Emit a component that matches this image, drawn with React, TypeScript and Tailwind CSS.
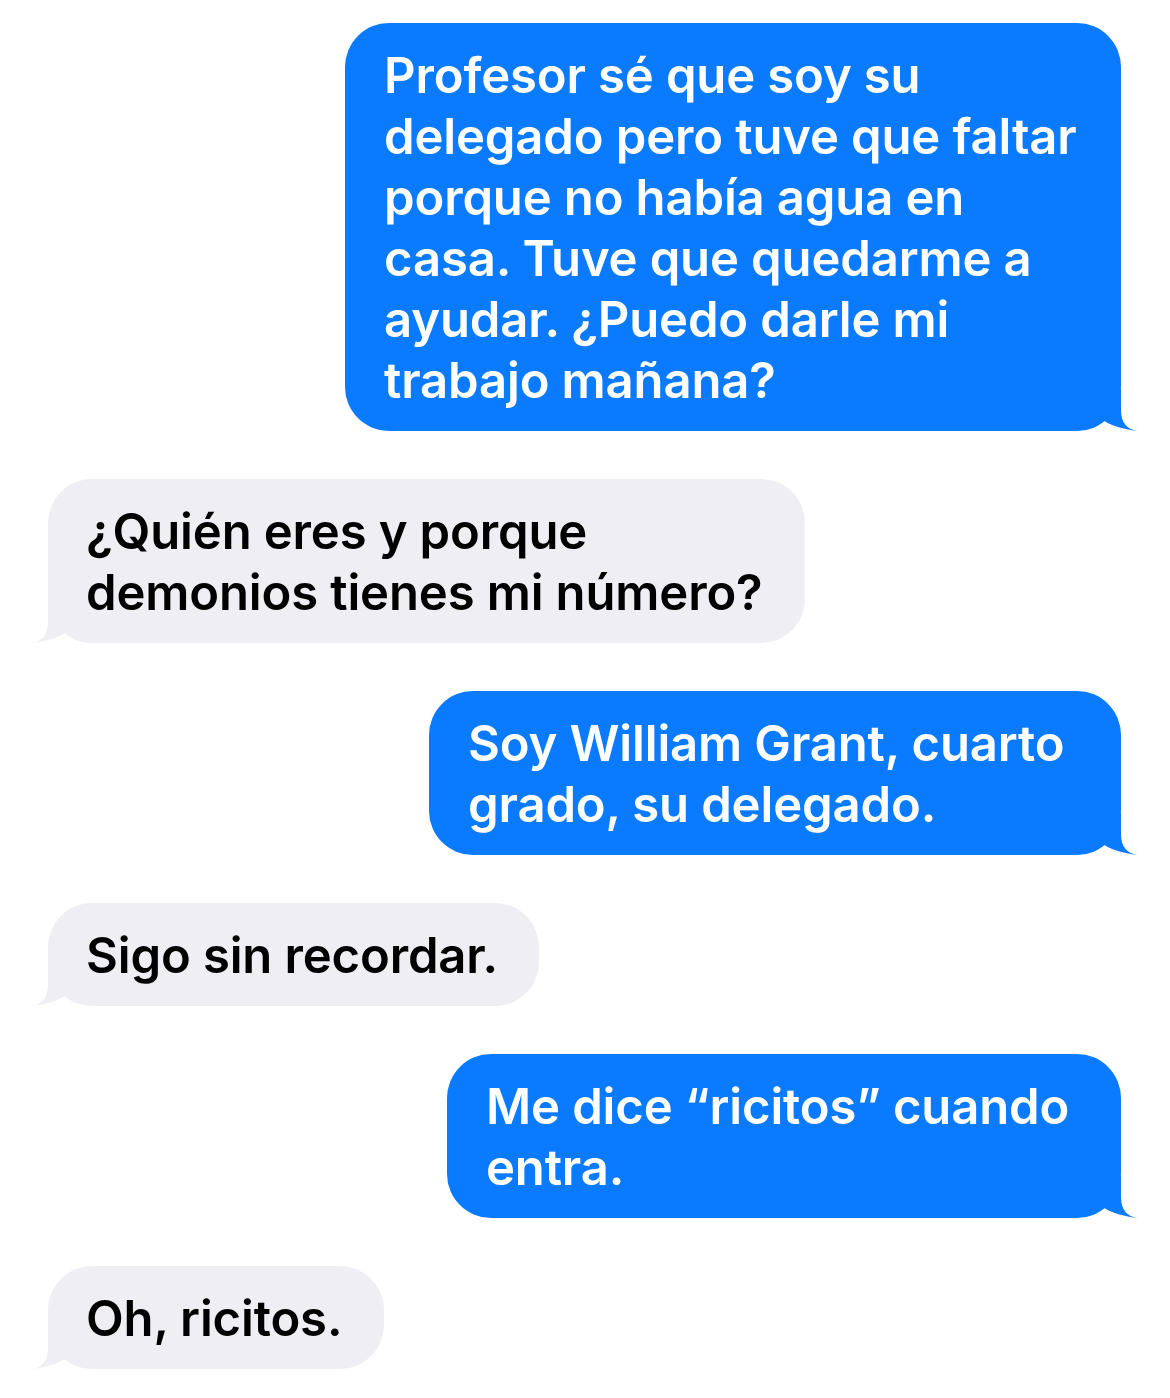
import React from "react";

type Msg = {
  from: "me" | "them";
  lines: string[];
  width: string;
};

const messages: Msg[] = [
  {
    from: "me",
    width: "w-[776px]",
    lines: [
      "Profesor sé que soy su",
      "delegado pero tuve que faltar",
      "porque no había agua en",
      "casa. Tuve que quedarme a",
      "ayudar. ¿Puedo darle mi",
      "trabajo mañana?",
    ],
  },
  {
    from: "them",
    width: "w-[757px]",
    lines: ["¿Quién eres y porque", "demonios tienes mi número?"],
  },
  {
    from: "me",
    width: "w-[692px]",
    lines: ["Soy William Grant, cuarto", "grado, su delegado."],
  },
  {
    from: "them",
    width: "w-[491px]",
    lines: ["Sigo sin recordar."],
  },
  {
    from: "me",
    width: "w-[674px]",
    lines: ["Me dice “ricitos” cuando", "entra."],
  },
  {
    from: "them",
    width: "w-[336px]",
    lines: ["Oh, ricitos."],
  },
];

function Tail({ side, color }: { side: "left" | "right"; color: string }) {
  return (
    <svg
      className={
        side === "right"
          ? "absolute -right-[17px] bottom-0 h-[42px] w-[42px]"
          : "absolute -left-[17px] bottom-0 h-[42px] w-[42px] -scale-x-100"
      }
      viewBox="0 0 42 42"
      fill={color}
    >
      <path d="M0 0 L25 0 L25 22 Q25.5 40 42 42 Q16 39 4 29 Z" />
    </svg>
  );
}

function Bubble({ msg }: { msg: Msg }) {
  const mine = msg.from === "me";
  return (
    <div className={mine ? "flex justify-end" : "flex justify-start"}>
      <div
        className={`relative ${msg.width} rounded-[44px] pt-[22px] pb-[20px] whitespace-nowrap text-[49px] leading-[61px] font-semibold ${
          mine ? "bg-[#0a7bff] pl-[39px] text-white" : "bg-[#eeeef3] pl-[38px] text-black"
        }`}
      >
        <Tail side={mine ? "right" : "left"} color={mine ? "#0a7bff" : "#eeeef3"} />
        <p className="relative">
          {msg.lines.map((l, i) => (
            <React.Fragment key={i}>
              {l}
              {i < msg.lines.length - 1 && <br />}
            </React.Fragment>
          ))}
        </p>
      </div>
    </div>
  );
}

export default function App() {
  return (
    <div
      className="min-h-[1398px] w-[1170px] bg-white pl-[48px] pr-[49px] pt-[23px] tracking-[-0.008em]"
      style={{ fontFamily: "Inter, 'Noto Sans', sans-serif" }}
    >
      <div className="flex flex-col gap-[48px]">
        {messages.map((m, i) => (
          <Bubble key={i} msg={m} />
        ))}
      </div>
    </div>
  );
}
